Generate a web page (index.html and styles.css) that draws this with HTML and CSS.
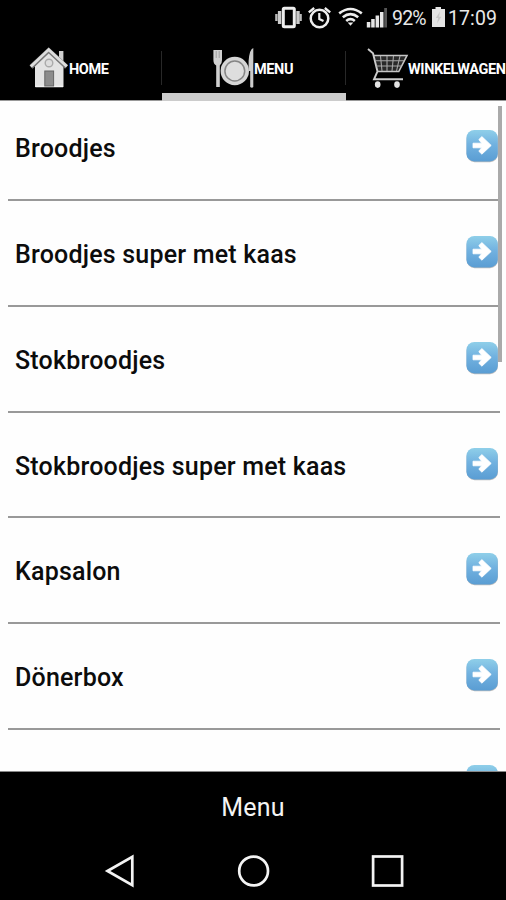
FILE: index.html
```html
<!DOCTYPE html>
<html lang="nl">
<head>
<meta charset="utf-8">
<title>Menu</title>
<link rel="stylesheet" href="styles.css">
</head>
<body>
<svg class="defs" width="0" height="0" aria-hidden="true">
  <defs>
    <linearGradient id="blue" x1="0" y1="0" x2="0" y2="1">
      <stop offset="0" stop-color="#8fcfe9"/><stop offset=".45" stop-color="#72b2e0"/><stop offset="1" stop-color="#5a9dd3"/>
    </linearGradient>
    <symbol id="go" viewBox="0 0 34 34">
      <rect x="1.6" y="1.8" width="31.4" height="31.4" rx="8" fill="#bdbdbd"/>
      <rect x="1.4" y="1" width="31.4" height="31.4" rx="8" fill="url(#blue)"/>
      <path d="M8 14.2H16.6L13.8 10.6L16.9 7.6L26.2 16.4L16.9 25.2L13.8 22.2L16.6 18.8H8Z" fill="#fff" stroke="#fff" stroke-width=".8" stroke-linejoin="round"/>
    </symbol>
  </defs>
</svg>
<div class="phone">
  <header class="status">
    <svg class="status-icons" width="114" height="34" viewBox="274 0 114 34">
      <g fill="none" stroke="#eee">
        <rect x="283.3" y="8.3" width="11" height="18.4" rx="1" stroke-width="3"/>
        <path d="M279.6 11V24M298 11V24" stroke-width="3.4" stroke="#ccc"/>
        <path d="M276.4 14V21M300.6 14V21" stroke-width="2.4" stroke="#bbb"/>
        <circle cx="319.5" cy="18.5" r="8.8" stroke-width="2.5"/>
        <path d="M319.3 13V19L323.5 21" stroke-width="2.2"/>
        <path d="M308.8 12.4L314.2 8M324.8 8L330.2 12.4" stroke-width="2.4"/>
        <path d="M339.2 13.4Q350.5 4.6 361.8 13.4M342.8 17.2Q350.5 11 358.2 17.2M346.2 21Q350.5 17.4 354.8 21" stroke-width="2.6"/>
      </g>
      <path d="M347.7 22.5H353.3L350.5 25.8Z" fill="#eee"/>
      <g fill="#e6e6e6">
        <rect x="366.8" y="22" width="3.5" height="5.5"/><rect x="371.2" y="19" width="3.5" height="8.5"/>
        <rect x="375.6" y="15.5" width="3.5" height="12"/><rect x="380" y="12" width="3.5" height="15.5"/>
        <rect x="384.2" y="8" width="2.8" height="19.5" fill="#555"/>
      </g>
    </svg>
    <span class="percent">92%</span>
    <svg class="battery" width="15" height="22" viewBox="0 0 15 22">
      <path d="M1 3H4.5V1H10V3H14V21H1Z" fill="#e4e4e4"/>
      <path d="M9 5.5L4.8 12H7.2L6 17.5L10.4 10.8H8Z" fill="#c8c8c8"/>
    </svg>
    <span class="clock">17:09</span>
  </header>

  <nav class="tabs">
    <a class="tab home">
      <svg width="40" height="42" viewBox="29 47 40 42">
        <rect x="59" y="51" width="4.4" height="11" fill="#d0d0d0"/>
        <path d="M35 66L49 51L63.5 66V87H35Z" fill="#e3e3e3"/>
        <path d="M35.5 86.5H63" stroke="#f4f4f4" stroke-width="1.5"/>
        <path d="M31 67L48.7 50.3L66.6 67" fill="none" stroke="#777" stroke-width="4.6"/>
        <path d="M30.8 66.4L48.7 49.6L66.8 66.4" fill="none" stroke="#ddd" stroke-width="2.8"/>
        <circle cx="49" cy="63" r="3.8" fill="#ddd" stroke="#aaa" stroke-width="1.4"/>
        <rect x="44.8" y="71" width="8.8" height="15" fill="#8c8c8c" stroke="#666"/>
      </svg>
      <span>HOME</span>
    </a>
    <a class="tab menu active">
      <svg width="42" height="42" viewBox="212 47 42 42">
        <path d="M213.4 50H222V60Q222 64 219.8 65.5V87H216.2V65.5Q213.4 64 213.4 60Z" fill="#d0d0d0"/>
        <path d="M216.2 51V58M219.2 51V58" stroke="#999" stroke-width=".9"/>
        <circle cx="234.8" cy="71" r="14.2" fill="#d5d5d5"/>
        <circle cx="234.8" cy="71" r="9.9" fill="#dedede" stroke="#858585" stroke-width="1.5"/>
        <path d="M253.3 48V87Q252 88.5 250.2 87V71H248.6V61Q249.5 49 253.3 48Z" fill="#ccc"/>
      </svg>
      <span>MENU</span>
    </a>
    <a class="tab cart">
      <svg width="42" height="42" viewBox="367 47 42 42">
        <path d="M374 55.5H407L398.8 71.5H377Z" fill="#292929"/>
        <path d="M368 49L373 53.2L377.5 71.5L374 79.3H403" fill="none" stroke="#ccc" stroke-width="1.9"/>
        <path d="M374 55.5H407L398.8 71.5H377.5" fill="none" stroke="#c5c5c5" stroke-width="1.6"/>
        <path d="M375 60.8H404M376 66H401.5M380.5 56L382 71M387 56V71M393.5 56L392 71M400 56L396.5 71" stroke="#a8a8a8" stroke-width="1.1"/>
        <ellipse cx="377.7" cy="84.6" rx="2.8" ry="3.3" fill="#e5e5e5"/><ellipse cx="397" cy="84.6" rx="2.8" ry="3.3" fill="#e5e5e5"/>
      </svg>
      <span>WINKELWAGEN</span>
    </a>
  </nav>

  <main class="list">
    <div class="row"><span>Broodjes</span><svg class="go"><use href="#go"/></svg></div>
    <div class="row"><span>Broodjes super met kaas</span><svg class="go"><use href="#go"/></svg></div>
    <div class="row"><span>Stokbroodjes</span><svg class="go"><use href="#go"/></svg></div>
    <div class="row"><span>Stokbroodjes super met kaas</span><svg class="go"><use href="#go"/></svg></div>
    <div class="row"><span>Kapsalon</span><svg class="go"><use href="#go"/></svg></div>
    <div class="row"><span>Dönerbox</span><svg class="go"><use href="#go"/></svg></div>
    <div class="row"><svg class="go"><use href="#go"/></svg></div>
    <div class="scrollbar"></div>
  </main>

  <footer class="title">Menu</footer>
  <div class="navbar">
    <svg width="34" height="34" viewBox="0 0 34 34"><path d="M4.5 17L29.3 2.8V31.2Z"/></svg>
    <svg width="34" height="34" viewBox="0 0 34 34"><circle cx="16.6" cy="17" r="14.4"/></svg>
    <svg width="34" height="34" viewBox="0 0 34 34"><rect x="2.1" y="2.5" width="29" height="29"/></svg>
  </div>
</div>
</body>
</html>
```
FILE: styles.css
```css
body {
  margin: 0;
  background: #000;
  font-family: Roboto, "Liberation Sans", sans-serif;
}
.defs { position: absolute; }
.phone {
  display: flex;
  flex-direction: column;
  width: 506px;
  height: 900px;
  overflow: hidden;
  background: #000;
  color: #fff;
}
.status {
  display: flex;
  flex: none;
  height: 36px;
  padding-left: 274px;
  font-size: 19.5px;
  line-height: 37px;
  color: #e8e8e8;
  white-space: nowrap;
}
.percent { width: 39px; margin-left: 4px; letter-spacing: -0.8px; }
.battery { margin: 6px 2px 0 0; flex: none; }
.clock { letter-spacing: 0.1px; }
.status-icons { flex: none; }

.tabs {
  display: flex;
  flex: none;
  height: 64px;
  border-bottom: 1px solid #999;
}
.tab {
  display: flex;
  flex: none;
  box-sizing: border-box;
  height: 65px;
  padding-top: 11px;
  font-size: 14.5px;
  font-weight: 700;
  line-height: 45px;
  white-space: nowrap;
  background: linear-gradient(#282828, #282828) right 15px / 1px 34px no-repeat;
}
.tab svg { flex: none; }
.home { width: 162px; padding-left: 29px; letter-spacing: -0.4px; }
.menu { width: 184px; padding-left: 50px; letter-spacing: -0.4px; }
.cart { width: 160px; padding-left: 21px; letter-spacing: -0.4px; background: none; overflow: hidden; }
.cart span { margin-left: -1px; }
.active { border-bottom: 8px solid #ccc; }

.list {
  position: relative;
  flex: none;
  box-sizing: border-box;
  height: 671px;
  padding: 0 6px 0 8px;
  overflow: hidden;
  background: #fefefe;
  border-bottom: 1px solid #888;
  color: #0c0c0c;
}
.row {
  display: flex;
  justify-content: space-between;
  box-sizing: border-box;
  height: 105.85px;
  padding: 0 1px 0 7px;
  border-bottom: 2px solid #999;
  font-size: 25px;
  font-weight: 500;
  letter-spacing: 0.2px;
  line-height: 108px;
}
.row:first-child { margin-top: -6px; }
.row:nth-child(7) { justify-content: flex-end; }
.go { width: 34px; height: 34px; margin-top: 34px; }
.scrollbar {
  position: absolute;
  top: 5px;
  left: 498px;
  width: 4px;
  height: 256px;
  background: #aaa;
}
.title {
  flex: none;
  height: 70px;
  line-height: 71px;
  font-size: 25px;
  letter-spacing: 0.2px;
  text-align: center;
  color: #f4f4f4;
}
.navbar {
  display: flex;
  justify-content: space-between;
  padding: 12px 101px 0 103px;
}
.navbar svg { fill: none; stroke: #f4f4f4; stroke-width: 2.7; }
```
